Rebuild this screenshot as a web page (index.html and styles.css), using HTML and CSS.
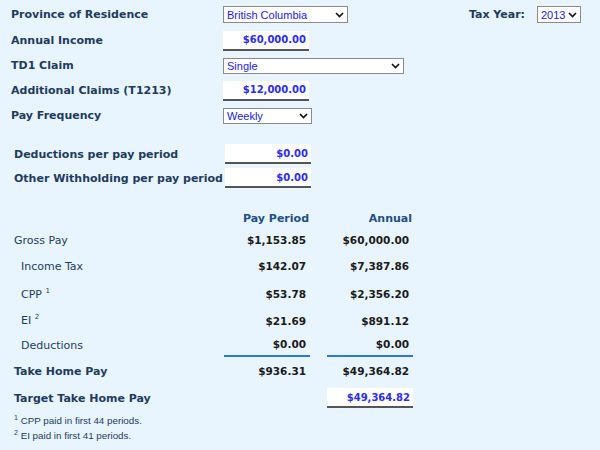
FILE: index.html
```html
<!DOCTYPE html>
<html lang="en">
  <head>
    <meta charset="UTF-8" />
    <meta name="viewport" content="width=device-width, initial-scale=1.0" />
    <title>Take Home Pay Calculator</title>
    <link rel="stylesheet" href="styles.css">
  </head>
  <body>
    <!-- Inputs -->
    <div class="form">
      <div class="row first">
        <label class="label">Province of Residence</label>
        <span class="pick w-prov">
          <select><option>British Columbia</option></select>
          <svg class="chev" viewBox="0 0 9 6"><path d="M1 1l3.5 3.5L8 1" /></svg>
        </span>
        <div class="year">
          <label class="label">Tax Year:</label>
          <span class="pick w-year">
            <select><option>2013</option></select>
            <svg class="chev" viewBox="0 0 9 6"><path d="M1 1l3.5 3.5L8 1" /></svg>
          </span>
        </div>
      </div>
      <div class="row">
        <label class="label">Annual Income</label>
        <input class="money" type="text" value="$60,000.00">
      </div>
      <div class="row">
        <label class="label">TD1 Claim</label>
        <span class="pick w-claim">
          <select><option>Single</option></select>
          <svg class="chev" viewBox="0 0 9 6"><path d="M1 1l3.5 3.5L8 1" /></svg>
        </span>
      </div>
      <div class="row">
        <label class="label">Additional Claims (T1213)</label>
        <input class="money" type="text" value="$12,000.00">
      </div>
      <div class="row">
        <label class="label">Pay Frequency</label>
        <span class="pick w-freq">
          <select><option>Weekly</option></select>
          <svg class="chev" viewBox="0 0 9 6"><path d="M1 1l3.5 3.5L8 1" /></svg>
        </span>
      </div>
    </div>

    <div class="extra">
      <div class="row short">
        <label class="label">Deductions per pay period</label>
        <input class="money" type="text" value="$0.00">
      </div>
      <div class="row short">
        <label class="label">Other Withholding per pay period</label>
        <input class="money" type="text" value="$0.00">
      </div>
    </div>

    <!-- Results -->
    <div class="results">
      <div class="line head">
        <span></span>
        <span class="num">Pay Period</span>
        <span class="num">Annual</span>
      </div>
      <div class="line gross">
        <span>Gross Pay</span>
        <span class="num">$1,153.85</span>
        <span class="num">$60,000.00</span>
      </div>
      <div class="line sub tax">
        <span>Income Tax</span>
        <span class="num">$142.07</span>
        <span class="num">$7,387.86</span>
      </div>
      <div class="line sub cpp">
        <span>CPP <sup>1</sup></span>
        <span class="num">$53.78</span>
        <span class="num">$2,356.20</span>
      </div>
      <div class="line sub ei">
        <span>EI <sup>2</sup></span>
        <span class="num">$21.69</span>
        <span class="num">$891.12</span>
      </div>
      <div class="line sub total-above">
        <span>Deductions</span>
        <span class="num">$0.00</span>
        <span class="num">$0.00</span>
      </div>
      <div class="line strong home">
        <span>Take Home Pay</span>
        <span class="num">$936.31</span>
        <span class="num">$49,364.82</span>
      </div>
      <div class="line strong">
        <span>Target Take Home Pay</span>
        <span></span>
        <input class="money target" type="text" value="$49,364.82">
      </div>
      <div class="notes">
        <p class="note"><sup>1</sup> CPP paid in first 44 periods.</p>
        <p class="note"><sup>2</sup> EI paid in first 41 periods.</p>
      </div>
    </div>
  </body>
</html>
```

FILE: styles.css
```css
html,
body {
  margin: 0;
  padding: 0;
  width: 100%;
  height: 100%;
  overflow: hidden;
}

body {
  background: #e8f4fe;
  color: #1e3c5e;
  font-family: "DejaVu Sans", Verdana, sans-serif;
  font-size: 11px;
  padding: 1px 0 0 11px;
  box-sizing: border-box;
}

.label {
  font-weight: bold;
  color: #1e3c5e;
}

.row {
  display: flex;
  align-items: center;
  height: 25px;
}

.row.first {
  height: 27px;
}

.row > .label {
  width: 212px;
  flex: none;
  white-space: nowrap;
}

/* Selects */
.pick {
  position: relative;
  display: inline-block;
  height: 17px;
}

.pick select {
  appearance: none;
  -webkit-appearance: none;
  width: 100%;
  height: 100%;
  margin: 0;
  padding: 0 0 0 3px;
  border: 1px solid #8a8a8a;
  border-radius: 0;
  background: #fff;
  color: #1a1ae8;
  font-family: "Liberation Sans", Arial, sans-serif;
  font-size: 11px;
  box-sizing: border-box;
}

.chev {
  position: absolute;
  right: 4px;
  top: 6px;
  width: 9px;
  height: 6px;
  fill: none;
  stroke: #111;
  stroke-width: 1.6;
  pointer-events: none;
}

.w-prov { width: 125px; }
.w-claim { width: 181px; height: 16px; }
.w-freq { width: 89px; height: 16px; }
.w-year { width: 44px; }

.w-claim .chev,
.w-freq .chev { top: 5px; }

.year {
  display: flex;
  align-items: center;
  gap: 12px;
  margin-left: auto;
  margin-right: 19px;
}

/* Text inputs */
.money {
  width: 86px;
  height: 20px;
  margin: 0;
  padding: 0 3px 0 0;
  border: none;
  border-bottom: 2px solid #555;
  background: #fff;
  color: #2b2bf2;
  font-family: inherit;
  font-size: 10px;
  font-weight: bold;
  text-align: right;
  box-sizing: border-box;
}

.extra {
  margin: 14px 0 0 3px;
}

.row.short {
  height: 24px;
}

.row.short > .label {
  width: 211px;
}

/* Results */
.results {
  margin: 18px 0 0 3px;
}

.line {
  display: grid;
  grid-template-columns: 193px 86px 86px;
  column-gap: 17px;
  align-items: center;
  height: 26px;
  box-sizing: border-box;
  color: #1e3c5e;
}

.line .num {
  text-align: right;
  padding-right: 4px;
  font-size: 10.5px;
  font-weight: bold;
  color: #1a1a1a;
}

.line.head {
  height: 20px;
}

.line.head .num {
  font-size: 11px;
  color: #1e4f86;
  padding-right: 1px;
}

.line.gross { height: 24px; }
.line.tax { height: 28px; }
.line.cpp { height: 26px; padding-top: 2px; }
.line.ei { height: 27px; padding-top: 2px; }
.line.home { height: 28px; }

.line.sub > span:first-child {
  padding-left: 7px;
}

.line.total-above {
  height: 24px;
}

.line.total-above .num {
  align-self: stretch;
  display: flex;
  align-items: center;
  justify-content: flex-end;
  border-bottom: 2px solid #2a7bd0;
}

.line.strong > span:first-child {
  font-weight: bold;
}

sup {
  font-size: 7px;
  line-height: 0;
}

.notes {
  padding-top: 2px;
}

.note {
  margin: 0;
  height: 15px;
  line-height: 15px;
  font-family: "Liberation Sans", Arial, sans-serif;
  font-size: 9.8px;
  color: #1e3c5e;
}
```
